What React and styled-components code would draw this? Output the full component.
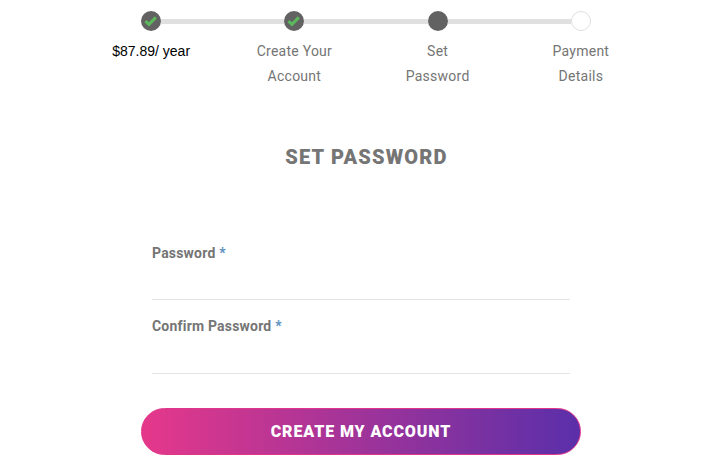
import styled, { createGlobalStyle } from "styled-components";

const steps = [
    { id: 1, lines: ["$87.89/ year"], dark: true, state: "done" },
    { id: 2, lines: ["Create Your", "Account"], state: "done" },
    { id: 3, lines: ["Set", "Password"], state: "current" },
    { id: 4, lines: ["Payment", "Details"], state: "todo" },
];

const App = () => {
    return (
        <>
            <GlobalStyle />
            <Page>
                <Track>
                    {steps.map((step, index) => (
                        <TrackPart key={step.id} $first={index === 0}>
                            {index > 0 && <Bar />}
                            <Dot $state={step.state}>
                                {step.state === "done" && (
                                    <svg width="14" height="12" viewBox="0 0 14 12">
                                        <path d="M1.4 6.2 L5 9.4 L11.8 2.4" fill="none" stroke="#5cb85c" strokeWidth="3" />
                                    </svg>
                                )}
                            </Dot>
                        </TrackPart>
                    ))}
                </Track>
                <Labels>
                    {steps.map((step) => (
                        <StepLabel key={step.id} $dark={step.dark}>
                            {step.lines.map((line) => <div key={line}>{line}</div>)}
                        </StepLabel>
                    ))}
                </Labels>
                <Title>SET PASSWORD</Title>
                <Form onSubmit={(e) => e.preventDefault()}>
                    <Field>
                        <FieldLabel htmlFor="password">Password <Star>*</Star></FieldLabel>
                        <Input id="password" type="password" />
                    </Field>
                    <Field>
                        <FieldLabel htmlFor="confirm" $tight>Confirm Password <Star>*</Star></FieldLabel>
                        <Input id="confirm" type="password" />
                    </Field>
                    <Submit type="submit">CREATE MY ACCOUNT</Submit>
                </Form>
            </Page>
        </>
    );
};

export default App;

//Styles

const GlobalStyle = createGlobalStyle`
    * {
        box-sizing: border-box;
    }
    html, body {
        margin: 0;
        background: #fff;
    }
`;

const Page = styled.main`
    width: 728px;
    height: 468px;
    overflow: hidden;
    padding-top: 11px;
    font-family: "Roboto", "Liberation Sans", sans-serif;
    display: flex;
    flex-direction: column;
    align-items: center;
`;

const Track = styled.div`
    width: 450px;
    margin-left: 4px;
    display: flex;
    align-items: center;
`;

const TrackPart = styled.div`
    display: flex;
    align-items: center;
    flex: ${(p) => (p.$first ? "0 0 auto" : "1")};
`;

const Bar = styled.div`
    flex: 1;
    height: 5px;
    background: #e0e0e0;
`;

const Dot = styled.div`
    width: 20px;
    height: 20px;
    border-radius: 50%;
    flex: none;
    display: flex;
    align-items: center;
    justify-content: center;
    background: ${(p) => (p.$state === "todo" ? "#fff" : "#626262")};
    border: ${(p) => (p.$state === "todo" ? "1px solid #e0e0e0" : "none")};
`;

const Labels = styled.div`
    width: 573px;
    margin-left: 4px;
    margin-top: 8px;
    display: grid;
    grid-template-columns: repeat(4, 1fr);
`;

const StepLabel = styled.div`
    text-align: center;
    font-size: 14px;
    line-height: 25px;
    letter-spacing: ${(p) => (p.$dark ? "0" : "0.25px")};
    color: ${(p) => (p.$dark ? "#000" : "#757575")};
    font-family: ${(p) => (p.$dark ? '"Liberation Sans", sans-serif' : "inherit")};
`;

const Title = styled.h1`
    margin: 56px 0 0 5px;
    font-size: 20px;
    line-height: 24px;
    font-weight: 900;
    letter-spacing: 1.2px;
    color: #757575;
`;

const Form = styled.form`
    width: 440px;
    margin-top: 74px;
    margin-right: 6px;
    display: flex;
    flex-direction: column;
`;

const Field = styled.div`
    margin: 0 11px;
    height: 74px;
    padding-bottom: 17px;
    display: flex;
    flex-direction: column;
`;

const FieldLabel = styled.label`
    font-size: 14px;
    line-height: ${(p) => (p.$tight ? "18px" : "20px")};
    font-weight: 700;
    letter-spacing: 0.2px;
    color: #757575;
`;

const Star = styled.span`
    color: #5b8fbf;
`;

const Input = styled.input`
    width: 100%;
    flex: 1;
    border: none;
    border-bottom: 1px solid #e4e4e4;
    outline: none;
    background: transparent;
`;

const Submit = styled.button`
    width: 440px;
    height: 47px;
    margin-top: 17px;
    padding: 0;
    border: 1px solid #e0358a;
    border-radius: 24px;
    background: linear-gradient(90deg, #e5388a 0%, #5a2fa9 100%);
    color: #fff;
    font-family: inherit;
    font-size: 16px;
    font-weight: 900;
    letter-spacing: 0.9px;
`;
